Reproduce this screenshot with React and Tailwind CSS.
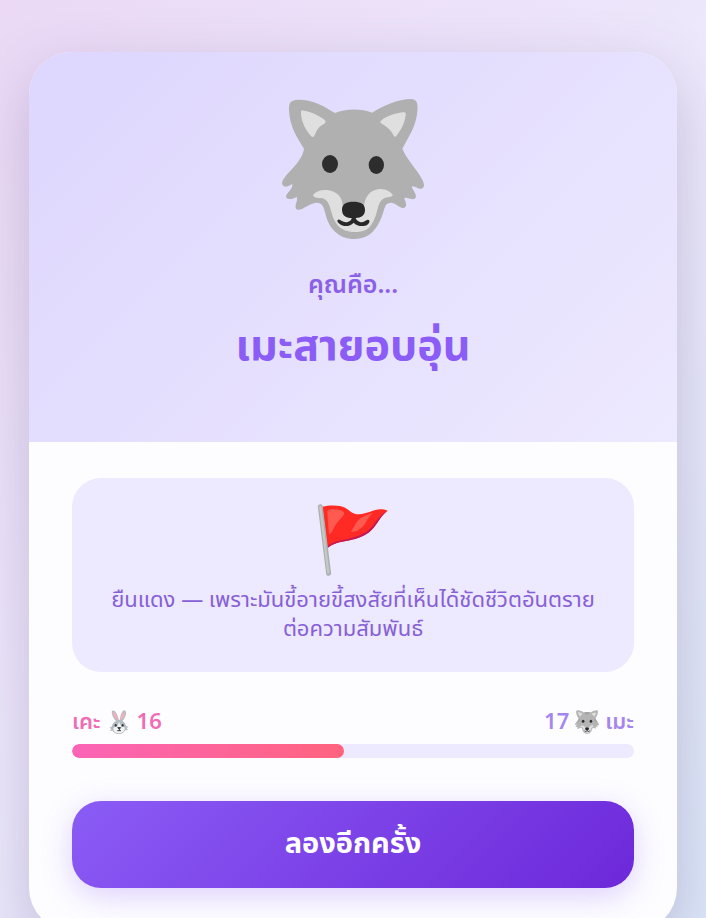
import React from "react";

function WolfHead({ className, detailed = false }) {
  return (
    <svg viewBox="36 42 426 420" className={className} aria-hidden="true">
      <path
        fill={detailed ? "#b4b4b5" : "#b0b0b0"}
        d="M195 84C158 61 124 43 84 44C61 45 56 54 57 77C60 126 81 157 102 191C99 218 76 241 57 262C43 278 32 291 38 300C44 309 56 304 66 297C69 301 66 310 58 319C49 328 45 336 51 340C58 345 71 341 80 336C85 344 75 356 77 368C79 376 88 375 94 373C113 364 130 351 145 354C159 356 162 371 167 389C177 430 206 462 254 462C303 462 325 426 339 385C346 360 348 354 363 353C378 354 389 370 402 369C414 364 406 350 403 339C412 336 425 346 434 341C444 334 432 320 425 306C431 298 444 315 455 311C470 305 458 284 446 266C431 243 408 218 397 191C419 151 439 121 442 79C444 55 441 43 424 42C382 42 342 62 306 83C275 70 227 70 195 84Z"
      />
      {detailed && (
        <path
          fill="#a2a3a5"
          d="M196 84C206 100 222 118 251 118C280 118 296 100 306 83C275 70 227 70 196 84ZM102 191C99 218 76 241 57 262L112 240L128 205ZM397 191C408 218 431 243 446 266L388 240L372 205Z"
        />
      )}
      <path
        fill="#dfdfdf"
        d="M94 76C116 78 143 89 164 105C170 112 165 116 158 119C146 124 140 137 133 152C129 158 125 157 121 151C103 129 92 104 93 80ZM333 107C351 92 379 84 400 82C407 81 408 85 407 91C404 116 392 137 379 153C376 157 372 156 370 150C362 134 351 127 338 118C329 113 330 110 333 107ZM129 330C142 314 170 311 192 321C213 331 217 345 219 369L282 362C286 333 300 316 327 312C348 310 363 321 369 331C362 339 347 335 338 343C319 356 326 389 304 419C292 437 274 441 254 441C210 441 193 414 184 381C178 355 170 340 151 339C141 339 130 338 129 330Z"
      />
      <ellipse cx="180" cy="237" rx="24" ry="27" fill="#2d2d2d" />
      <ellipse cx="319" cy="240" rx="23" ry="27" fill="#2d2d2d" />
      <path
        fill="#282828"
        d="M216 374C216 356 230 350 250 350C271 350 285 356 285 374C285 391 274 398 257 399C258 404 263 409 270 411C281 415 288 403 294 404C301 405 299 414 292 419C279 427 260 423 251 413C239 426 220 426 208 416C202 411 200 405 205 404C212 402 220 416 233 411C240 409 245 405 245 399C228 398 216 392 216 374Z"
      />
    </svg>
  );
}

function RabbitHead({ className }) {
  return (
    <svg viewBox="0 0 60 72" className={className} aria-hidden="true">
      <path
        fill="#b4bcc0"
        d="M21 33C12 25 6 9 9 3C16-4 27 14 29 29L33 29C34 13 42-3 49 2C55 8 48 25 40 33C47 37 50 42 51 48L59 50L53 54L57 60L49 61C44 70 37 72 30 72C22 72 15 69 11 62L3 63L7 57L1 53L8 50C10 41 15 36 21 33Z"
      />
      <path
        fill="#f3b0bd"
        d="M25 30C17 24 10 11 12 6C18 4 26 18 27 30ZM35 29C35 18 41 5 47 6C50 11 44 24 37 30Z"
      />
      <path
        fill="#f1f3f4"
        d="M30 36C33 40 35 46 37 51C47 49 50 54 46 61C42 68 37 70 30 70C22 70 16 67 14 61C11 54 16 49 24 51Z"
      />
      <ellipse cx="20" cy="46" rx="3" ry="4" fill="#30363a" />
      <ellipse cx="41" cy="46" rx="3" ry="4" fill="#30363a" />
      <path d="M26 53H35L31 57ZM31 57V61M25 62H36" fill="#34383a" stroke="#34383a" strokeWidth="3" />
    </svg>
  );
}

function RedFlag({ className }) {
  return (
    <svg viewBox="53 41 213 217" className={className} aria-hidden="true">
      <path
        fill="#ff2a23"
        d="M67 49C88 44 119 43 136 52C151 61 156 72 177 72C211 70 231 47 264 61C240 77 232 108 207 127C164 159 119 145 82 174Z"
      />
      <path
        fill="#c2185b"
        d="M264 61C240 77 232 108 207 127C164 159 119 145 82 174L81 168C118 143 160 152 200 125C227 104 234 76 264 61Z"
      />
      <path
        fill="#ff5a50"
        d="M82 61C99 53 124 57 132 66C137 74 120 85 110 100C99 115 97 130 87 132ZM153 125C164 111 166 97 182 84C194 75 209 71 221 67C202 81 203 94 190 108C178 121 165 126 153 125Z"
      />
      <path d="M61 49L86 250" fill="none" stroke="#adb0b0" strokeWidth="15" strokeLinecap="round" />
      <path d="M61 50L85 248" fill="none" stroke="#c6c8c7" strokeWidth="7" strokeLinecap="round" />
    </svg>
  );
}

export default function App() {
  const bunny = 16;
  const wolf = 17;
  const share = (bunny / (bunny + wolf)) * 100;

  return (
    <div
      lang="th"
      className="min-h-screen bg-linear-[135deg,#ebd9f6_0%,#ede8fc_45%,#dae6f8_100%] px-[29px] py-[52px] font-['Noto_Sans','Noto_Sans_Thai',sans-serif]"
    >
      <main className="overflow-hidden rounded-[43px] bg-[#fdfdff] shadow-[0_20px_60px_rgba(80,60,110,0.25)]">
        <header className="flex flex-col items-center bg-linear-[135deg,#ddd6fe,#ede9fe] px-6 pt-[47px] pb-[68px] text-center text-[#8b5cf6]">
          <WolfHead className="h-[140px] w-[142px]" />
          <p className="mt-6 text-[25px] leading-10 font-semibold text-[#8b60e9]">คุณคือ...</p>
          <h1 className="mt-[11px] text-[43px] leading-[60px] font-bold">เมะสายอบอุ่น</h1>
        </header>

        <div className="px-[43px] pt-9 pb-[43px]">
          <section className="flex flex-col items-center rounded-[29px] bg-[#ede9fe] px-9 pt-[26px] pb-[30px] text-center">
            <RedFlag className="size-[72px]" />
            <p className="mt-2 text-[22px] leading-[29px] text-[#8660d6]">
              ยืนแดง — เพราะมันขี้อายขี้สงสัยที่เห็นได้ชัดชีวิตอันตรายต่อความสัมพันธ์
            </p>
          </section>

          <div className="mt-8 flex justify-between text-[22px] leading-8 font-semibold">
            <span className="flex items-center gap-2 text-[#ef6db5]">
              เคะ
              <RabbitHead className="mt-1 h-6 w-5" />
              16
            </span>
            <span className="flex items-center gap-1.5 text-[#a586ef]">
              17
              <WolfHead detailed className="mt-1 size-6" />
              เมะ
            </span>
          </div>
          <div className="mt-2 h-[14px] overflow-hidden rounded-full bg-[#ede9fe]">
            <div
              className="h-full rounded-full bg-linear-to-r from-[#fb64b6] to-[#ff637e]"
              style={{ width: `${share}%` }}
            />
          </div>

          <button
            type="button"
            className="mt-[43px] block h-[87px] w-full rounded-[29px] bg-linear-[135deg,#8b5cf6,#6d28d9] pb-1.5 text-[29px] leading-10 font-bold text-white shadow-[0_8px_30px_rgba(139,92,246,0.28)]"
          >
            ลองอีกครั้ง
          </button>
        </div>
      </main>
    </div>
  );
}
